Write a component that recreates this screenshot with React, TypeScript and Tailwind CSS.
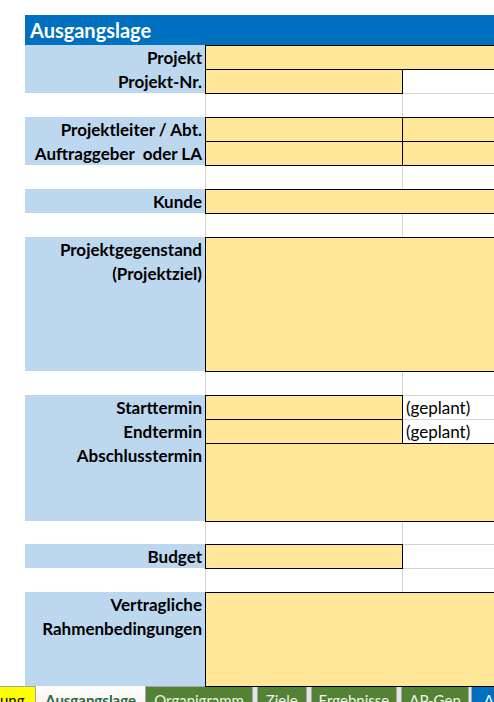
import React from 'react';

type Row =
  | { kind: 'empty'; h: number }
  | { kind: 'full'; h: number; lines: string[] }
  | { kind: 'split'; h: number; lines: string[]; right: 'yellow' | 'white'; note?: string };

const rows: Row[] = [
  { kind: 'full', h: 24, lines: ['Projekt'] },
  { kind: 'split', h: 24, lines: ['Projekt-Nr.'], right: 'white' },
  { kind: 'empty', h: 24 },
  { kind: 'split', h: 24, lines: ['Projektleiter / Abt.'], right: 'yellow' },
  { kind: 'split', h: 24, lines: ['Auftraggeber  oder LA'], right: 'yellow' },
  { kind: 'empty', h: 24 },
  { kind: 'full', h: 24, lines: ['Kunde'] },
  { kind: 'empty', h: 24 },
  { kind: 'full', h: 134, lines: ['Projektgegenstand', '(Projektziel)'] },
  { kind: 'empty', h: 24 },
  { kind: 'split', h: 24, lines: ['Starttermin'], right: 'white', note: '(geplant)' },
  { kind: 'split', h: 24, lines: ['Endtermin'], right: 'white', note: '(geplant)' },
  { kind: 'full', h: 78, lines: ['Abschlusstermin'] },
  { kind: 'empty', h: 23 },
  { kind: 'split', h: 24, lines: ['Budget'], right: 'white' },
  { kind: 'empty', h: 24 },
  { kind: 'full', h: 94, lines: ['Vertragliche', 'Rahmenbedingungen'] },
];

const Label = ({ lines }: { lines: string[] }) => (
  <div className="bg-[#bdd7ee] flex flex-col">
    {lines.map((l) => (
      <div key={l} className="h-6 flex items-end justify-end pr-[3px] font-bold text-[17px] leading-[22px] text-black whitespace-pre">
        {l}
      </div>
    ))}
  </div>
);

const whiteCell = 'bg-white border-l border-t border-[#d4d4d4]';
const yellowCell = 'relative z-10 bg-[#ffe699] border border-black -mb-px';

export default function App() {
  return (
    <div className="w-[494px] h-[702px] overflow-hidden bg-white flex flex-col" style={{ fontFamily: 'Lato, "Open Sans", sans-serif' }}>
      <div className="h-[15px] shrink-0" />
      <div className="grid grid-cols-[25px_180px_197px_1fr] shrink-0">
        <div />
        <div className="col-span-3 h-[30px] bg-[#0070c0] flex items-end pl-[5px] pb-[3px] text-white font-bold text-[20px] leading-[24px]">
          Ausgangslage
        </div>
        {rows.map((r, i) => (
          <React.Fragment key={i}>
            <div style={{ height: r.h }} />
            {r.kind === 'empty' ? (
              <>
                <div className="bg-white" />
                <div className={whiteCell} />
                <div className={whiteCell} />
              </>
            ) : r.kind === 'full' ? (
              <>
                <Label lines={r.lines} />
                <div className={`${yellowCell} col-span-2 border-r-0`} />
              </>
            ) : (
              <>
                <Label lines={r.lines} />
                <div className={`${yellowCell} -mr-px`} />
                {r.right === 'yellow' ? (
                  <div className={`${yellowCell} border-r-0`} />
                ) : (
                  <div className={`${whiteCell} flex items-end pl-[3px] text-[17px] leading-[22px] text-black`}>
                    {r.note}
                  </div>
                )}
              </>
            )}
          </React.Fragment>
        ))}
      </div>
      <div className="flex-1 border-t border-[#a6a6a6] bg-[#e4e4e4] flex text-[15px] leading-[18px]">
        <div className="w-[36px] bg-[#ffff00] border-r border-[#a6a6a6] pt-[4px] text-black overflow-hidden whitespace-nowrap">ung</div>
        <div className="w-[111px] bg-gradient-to-b from-white to-[#fbeee8] -mt-px border-r border-[#a6a6a6] pt-[5px] text-center font-bold text-[#1e6b45]">
          Ausgangslage
        </div>
        <div className="w-[107px] bg-[#548235] border-r border-[#a6a6a6] pt-[4px] text-center text-[#eef4ea]">Organigramm</div>
        <div className="w-[4px]" />
        <div className="w-[50px] bg-[#548235] border-x border-[#a6a6a6] pt-[4px] text-center text-[#eef4ea]">Ziele</div>
        <div className="w-[4px]" />
        <div className="w-[87px] bg-[#548235] border-x border-[#a6a6a6] pt-[4px] text-center text-[#eef4ea]">Ergebnisse</div>
        <div className="w-[4px]" />
        <div className="w-[68px] bg-[#548235] border-x border-[#a6a6a6] pt-[4px] text-center text-[#eef4ea]">AP-Gen</div>
        <div className="w-[2px]" />
        <div className="flex-1 bg-[#0070c0] border-l border-[#a6a6a6] pt-[4px] pl-[12px] text-white">A</div>
      </div>
    </div>
  );
}
